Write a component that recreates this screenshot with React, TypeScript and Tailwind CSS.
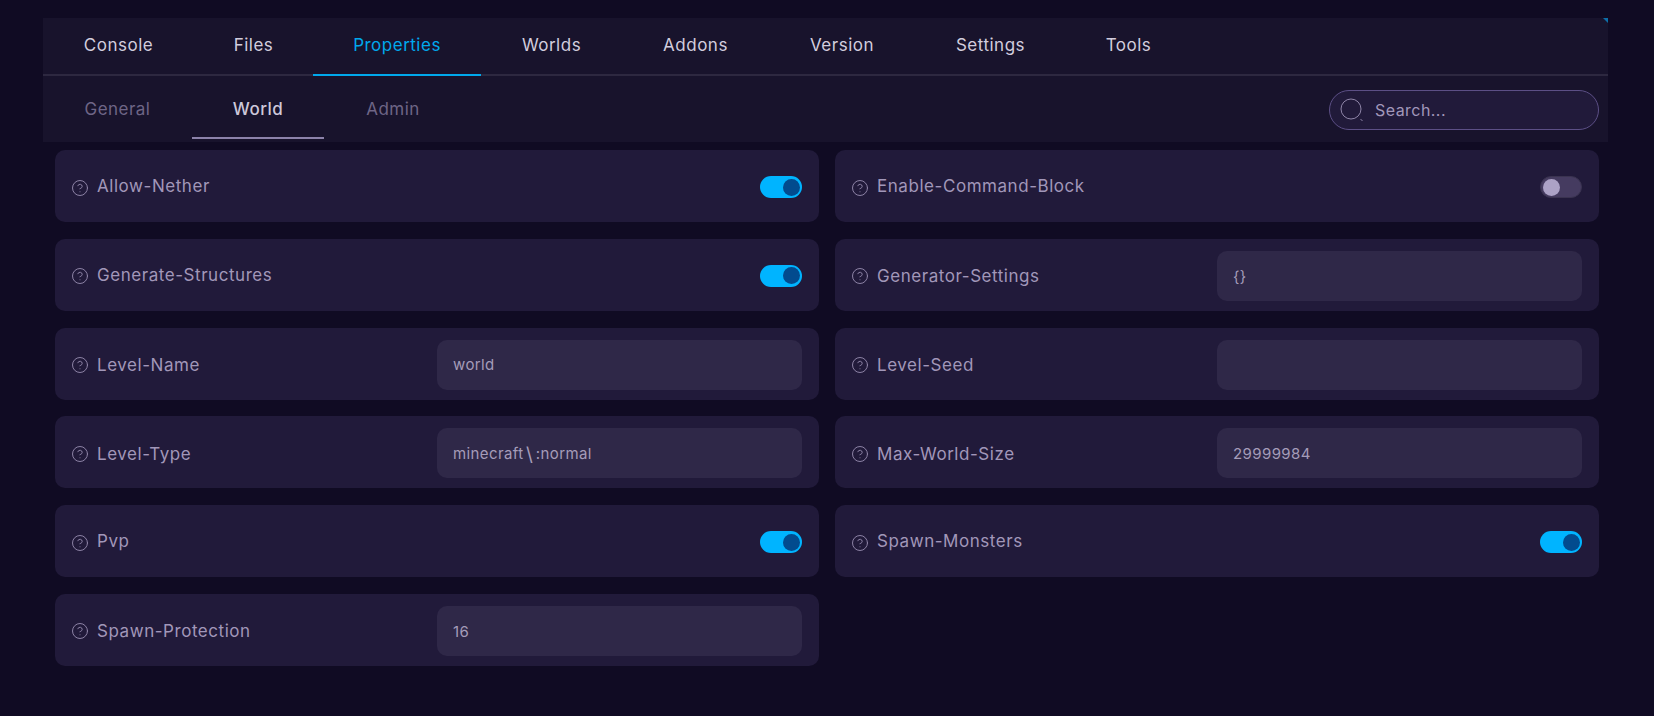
import React from 'react';
import { CircleHelp } from 'lucide-react';

const tabs = [
  { name: 'Console', width: 'w-[151px]' },
  { name: 'Files', width: 'w-[119px]' },
  { name: 'Properties', width: 'w-[168px]', active: true },
  { name: 'Worlds', width: 'w-[141px]' },
  { name: 'Addons', width: 'w-[147px]' },
  { name: 'Version', width: 'w-[146px]' },
  { name: 'Settings', width: 'w-[151px]' },
  { name: 'Tools', width: 'w-[125px]' },
];

const subTabs = [
  { name: 'General', width: 'w-[149px]' },
  { name: 'World', width: 'w-[132px]', active: true },
  { name: 'Admin', width: 'w-[138px]' },
];

type Prop = { label: string; on?: boolean; value?: string };

const props: Prop[] = [
  { label: 'Allow-Nether', on: true },
  { label: 'Enable-Command-Block', on: false },
  { label: 'Generate-Structures', on: true },
  { label: 'Generator-Settings', value: '{}' },
  { label: 'Level-Name', value: 'world' },
  { label: 'Level-Seed', value: '' },
  { label: 'Level-Type', value: 'minecraft\\:normal' },
  { label: 'Max-World-Size', value: '29999984' },
  { label: 'Pvp', on: true },
  { label: 'Spawn-Monsters', on: true },
  { label: 'Spawn-Protection', value: '16' },
];

const Toggle = ({ on }: { on: boolean }) => (
  <div
    className={`flex h-[22px] w-[42px] items-center rounded-full px-[2px] ${
      on ? 'justify-end bg-[#00b4ff]' : 'justify-start border border-[#3a3350] bg-[#453b60]'
    }`}
  >
    <div className={`h-[17px] w-[17px] rounded-full ${on ? 'bg-[#024b8e]' : 'bg-[#aca2c6]'}`} />
  </div>
);

// the backslash is a wide, tall glyph in the original font
const InputValue = ({ value }: { value: string }) => {
  const [before, after] = value.split('\\');
  if (after === undefined) return <>{value}</>;
  return (
    <>
      {before}
      <span className="px-[2.5px] text-[19px] leading-none">\</span>
      {after}
    </>
  );
};

const PropertyCard = ({ prop }: { prop: Prop }) => (
  <div className="flex h-[72px] items-center justify-between rounded-[10px] bg-[#211a3a] px-[17px] pt-[2px]">
    <div className="-ml-px flex items-center gap-[8px] text-[17px] tracking-[0.55px] text-[#a197b9]">
      <CircleHelp size={18} strokeWidth={1.3} className="mt-[1px] text-[#8f85a8]" />
      <span className={prop.value !== undefined ? 'mt-[2px]' : ''}>{prop.label}</span>
    </div>
    {prop.value !== undefined ? (
      <div className="flex h-[50px] w-[365px] items-center rounded-[10px] bg-[#2f2848] px-4 pt-[2px] text-[15px] tracking-[0.4px] text-[#a59cb9]">
        <InputValue value={prop.value} />
      </div>
    ) : (
      <Toggle on={!!prop.on} />
    )}
  </div>
);

export default function App() {
  return (
    <div
      className="h-[716px] w-full overflow-hidden bg-[#100b23] pl-[43px] pt-[18px]"
      style={{ fontFamily: 'Inter, "Open Sans", sans-serif' }}
    >
      <div className="relative w-[1565px] bg-[#18132c]">
        <div className="flex h-[58px] border-b-2 border-[#2d2840]">
          {tabs.map((tab) => (
            <div
              key={tab.name}
              className={`-mb-[2px] flex items-center justify-center border-b-2 pb-[1px] text-[17px] tracking-[0.5px] ${tab.width} ${
                tab.active ? 'border-[#00a8ec] text-[#00a8ec]' : 'border-transparent text-[#d2cdde]'
              }`}
            >
              {tab.name}
            </div>
          ))}
        </div>
        <div className="flex h-[66px] items-center justify-between pr-[9px]">
          <div className="flex h-full">
            {subTabs.map((tab) => (
              <div
                key={tab.name}
                className={`mb-[3px] flex items-center justify-center border-b-2 pt-[6px] text-[17px] tracking-[0.45px] ${tab.width} ${
                  tab.active
                    ? 'border-[#8c82aa] font-medium text-[#cdc8da]'
                    : 'border-transparent text-[#6e6586]'
                }`}
              >
                {tab.name}
              </div>
            ))}
          </div>
          <div className="mt-[1px] flex h-[40px] w-[270px] items-center gap-[11px] rounded-full border border-[#5c4f86] bg-[#211a3a] pl-[10px] text-[16px] tracking-[0.45px] text-[#a197ba]">
            <svg width="24" height="24" viewBox="0 0 24 24" fill="none" stroke="#8f85a8" strokeWidth="1">
              <circle cx="11" cy="11" r="10" />
              <path d="M20.5 21l2 2" />
            </svg>
            <span>Search...</span>
          </div>
        </div>
        <div
          className="absolute right-0 top-0 h-[5px] w-[5px] bg-[#0d6ea8]"
          style={{ clipPath: 'polygon(0 0, 100% 0, 100% 100%)' }}
        />
      </div>
      <div className="ml-[12px] mt-2 grid w-[1544px] grid-cols-2 gap-x-4 gap-y-[16.8px]">
        {props.map((prop) => (
          <PropertyCard key={prop.label} prop={prop} />
        ))}
      </div>
    </div>
  );
}
